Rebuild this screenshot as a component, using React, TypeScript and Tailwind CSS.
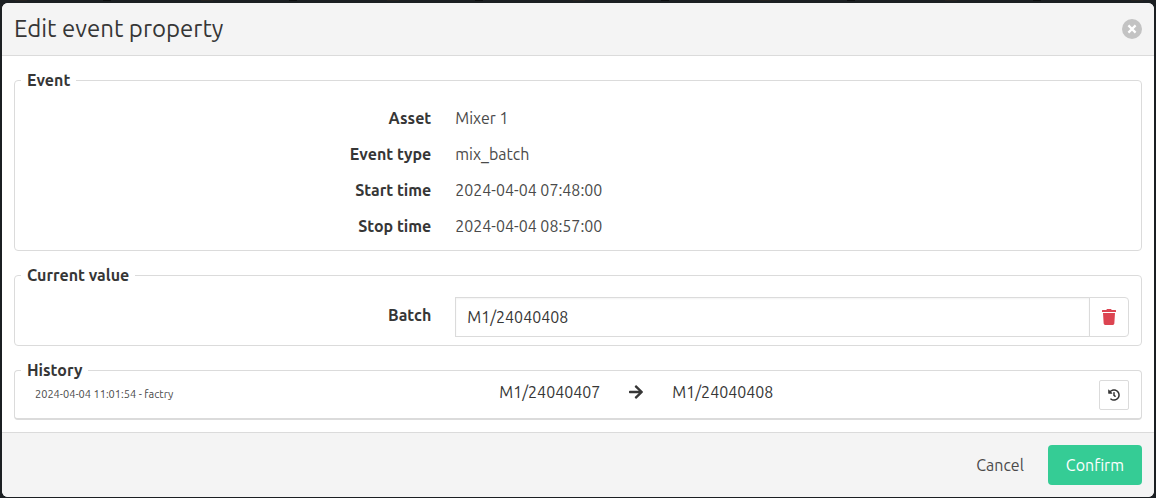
import { useState } from "react";
import type { ReactNode } from "react";
import { FaArrowRight, FaHistory, FaTrash } from "react-icons/fa";

const details = [
  { label: "Asset", value: "Mixer 1" },
  { label: "Event type", value: "mix_batch" },
  { label: "Start time", value: "2024-04-04 07:48:00" },
  { label: "Stop time", value: "2024-04-04 08:57:00" },
];

function Section({ title, className, children }: { title: string; className: string; children: ReactNode }) {
  return (
    <fieldset className={`min-w-0 rounded border border-[#dbdbdb] px-3 ${className}`}>
      <legend className="-ml-1.5 px-1.5 font-bold text-[#363636]">{title}</legend>
      {children}
    </fieldset>
  );
}

export default function App() {
  const [batch, setBatch] = useState("M1/24040408");

  return (
    <div className="min-h-screen bg-[#1b1f22] bg-[linear-gradient(90deg,transparent_15px,#242220_15px,#242220_27px,transparent_27px,transparent_103px,#0c0e0f_103px,#0c0e0f_111px,transparent_111px)] bg-[length:186px_1px] bg-repeat-x px-0.5 pt-[3px] pb-px font-[Ubuntu,'Noto_Sans',sans-serif] text-base leading-6 text-[#4a4a4a]">
      <div role="dialog" aria-labelledby="dialog-title" className="overflow-hidden rounded-md bg-white">
        <header className="flex items-center justify-between border-b border-[#dbdbdb] bg-[#f4f4f4] px-3 py-2.5">
          <h1 id="dialog-title" className="text-2xl leading-8 text-[#363636]">Edit event property</h1>
          <button type="button" aria-label="Close" className="grid size-5 place-items-center rounded-full bg-[#c3c3c3] text-white">
            <svg viewBox="0 0 20 20" className="size-5" fill="none" stroke="currentColor" strokeWidth="2.2">
              <path d="M6.4 6.4l7.2 7.2M13.6 6.4l-7.2 7.2" />
            </svg>
          </button>
        </header>

        <main className="flex flex-col gap-3 p-3">
          <Section title="Event" className="pt-3.5 pb-3">
            <dl className="flex flex-col gap-3">
              {details.map((item) => (
                <div key={item.label} className="grid grid-cols-[3fr_5fr] gap-6">
                  <dt className="text-right font-bold text-[#363636]">{item.label}</dt>
                  <dd>{item.value}</dd>
                </div>
              ))}
            </dl>
          </Section>

          <Section title="Current value" className="pt-2.5 pb-2">
            <div className="grid grid-cols-[3fr_5fr] gap-6">
              <label htmlFor="batch" className="pt-1.5 text-right font-bold text-[#363636]">Batch</label>
              <div className="flex">
                <input
                  id="batch"
                  type="text"
                  value={batch}
                  onChange={(e) => setBatch(e.target.value)}
                  className="h-10 min-w-0 flex-1 border border-[#dbdbdb] px-[11px] text-[#363636] shadow-[inset_0_1px_2px_rgba(10,10,10,0.05)] outline-none"
                />
                <button
                  type="button"
                  aria-label="Clear value"
                  onClick={() => setBatch("")}
                  className="-ml-px grid h-10 w-10 place-items-center rounded-r border border-[#dbdbdb] bg-white text-[#dc4451]"
                >
                  <FaTrash className="size-4" />
                </button>
              </div>
            </div>
          </Section>

          <Section title="History" className="border-b-2 pb-2">
            <div className="-mt-0.5 grid grid-cols-[3fr_4fr]">
              <div className="px-2 pt-0.5 text-[11px] leading-6">2024-04-04 11:01:54 - factry</div>
              <div className="flex text-[#363636]">
                <span>M1/24040407</span>
                <FaArrowRight className="mx-7 mt-1 size-4" />
                <span>M1/24040408</span>
                <button
                  type="button"
                  aria-label="Restore value"
                  className="ml-auto grid size-[30px] place-items-center rounded-xs border border-[#dbdbdb] bg-white"
                >
                  <FaHistory className="size-3" />
                </button>
              </div>
            </div>
          </Section>
        </main>

        <footer className="flex justify-end gap-2 border-t border-[#dbdbdb] bg-[#f4f4f4] p-3">
          <button type="button" className="h-10 px-4">Cancel</button>
          <button type="button" className="h-10 rounded bg-[#35cc95] px-[18px] text-white">Confirm</button>
        </footer>
      </div>
    </div>
  );
}
